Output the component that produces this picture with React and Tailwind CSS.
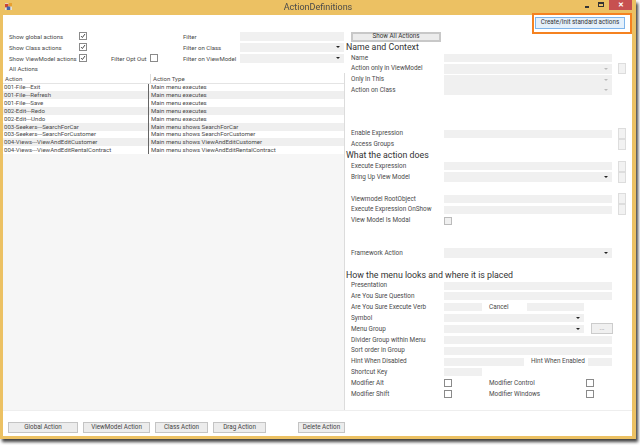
const font = { fontFamily: 'Roboto, "Liberation Sans", sans-serif' };

function Check({ checked, muted }) {
  return (
    <span className={"flex h-[8px] w-[8px] shrink-0 items-center justify-center border " + (muted ? "border-[#bbbbbb] bg-[#f0f0f0]" : "border-[#8a8a8a] bg-white")}>
      {checked && (
        <svg viewBox="0 0 8 8" className="h-[8px] w-[8px]" fill="none" stroke="#333" strokeWidth="1.2">
          <path d="M1.5 4.2 L3.2 6 L6.6 1.4" />
        </svg>
      )}
    </span>
  );
}

function Arrow({ light }) {
  return <span className={"mr-[4px] h-0 w-0 border-x-[2px] border-t-[2.5px] border-x-transparent " + (light ? "border-t-[#bbbbbb]" : "border-t-[#222222]")} />;
}

function Field({ w, combo, light, h = "h-[8px]" }) {
  return (
    <span className={"flex shrink-0 items-center justify-end bg-[#f0f0f0] " + h + " " + w}>
      {combo && <Arrow light={light} />}
    </span>
  );
}

function Side() {
  return <span className="ml-[6px] h-[11px] w-[8px] shrink-0 border border-[#dddddd] bg-[#f2f2f2]" />;
}

function Row({ label, children, side }) {
  return (
    <div className="flex h-[10.85px] items-center">
      <span className="w-[93px] shrink-0 whitespace-nowrap pt-[1px]">{label}</span>
      {children}
      {side && <Side />}
    </div>
  );
}

function Heading({ children }) {
  return <div className="-ml-[5px] flex h-[10.85px] items-center whitespace-nowrap pt-[1px] text-[8.8px] text-[#333333]">{children}</div>;
}

const Gap = ({ n = 1 }) => <div style={{ height: n * 10.85 }} />;

const actions = [
  ["001-File---Exit", "Main menu executes"],
  ["001-File---Refresh", "Main menu executes"],
  ["001-File---Save", "Main menu executes"],
  ["002-Edit---Redo", "Main menu executes"],
  ["002-Edit---Undo", "Main menu executes"],
  ["003-Seekers---SearchForCar", "Main menu shows SearchForCar"],
  ["003-Seekers---SearchForCustomer", "Main menu shows SearchForCustomer"],
  ["004-Views---ViewAndEditCustomer", "Main menu shows ViewAndEditCustomer"],
  ["004-Views---ViewAndEditRentalContract", "Main menu shows ViewAndEditRentalContract"],
];

function BottomButton({ w, ml, children }) {
  return (
    <button className={"flex h-[11px] items-center justify-center border border-[#c4c4c4] bg-[#ececec] text-[6.3px] text-[#444444] " + w + " " + ml}>
      {children}
    </button>
  );
}

function FilterRow({ label, mid, checked, filter, combo }) {
  return (
    <div className="flex h-[11px] items-center">
      <span className="w-[70px] shrink-0 whitespace-nowrap pt-[1px]">{label}</span>
      <Check checked={checked} />
      <span className="ml-[24px] w-[39px] shrink-0 whitespace-nowrap pt-[1px]">{mid}</span>
      <span className="w-[8px] shrink-0">{mid && <Check />}</span>
      <span className="ml-[25px] w-[57px] shrink-0 whitespace-nowrap pt-[1px]">{filter}</span>
      <Field w="w-[104px]" combo={combo} h="h-[9px]" />
    </div>
  );
}

export default function App() {
  return (
    <div className="relative h-[445px] w-[640px] overflow-hidden bg-white text-[6.4px] text-[#4a4a4a]" style={font}>
      <div className="h-[439px] w-[636px] bg-[#ecc163] shadow-[2px_3px_3px_rgba(0,0,0,0.75)] blur-[0.4px]">
        <div className="relative flex h-[15px] items-center justify-center text-[9px] text-[#4a4a4a]">
          <svg viewBox="0 0 8 8" className="absolute left-[5px] top-[3px] h-[7px] w-[7px]">
            <rect width="8" height="8" fill="#e8e0d0" />
            <rect x="0" y="1" width="4" height="4" fill="#cc4433" />
            <rect x="4" y="0" width="4" height="4" fill="#e8a030" />
            <rect x="2" y="4" width="4" height="4" fill="#4466aa" />
          </svg>
          <span>ActionDefinitions</span>
          <span className="absolute left-[585px] top-[6px] h-[1.5px] w-[4px] bg-[#333333]" />
          <span className="absolute left-[598px] top-[2px] h-[5px] w-[6px] border border-t-2 border-[#333333]" />
          <span className="absolute left-[609px] top-0 flex h-[10px] w-[23px] items-center justify-center bg-[#c75050] text-[7px] font-bold text-white">✕</span>
        </div>

        <div className="ml-[3px] flex h-[421px] w-[629px] flex-col bg-white">
          <div className="flex h-[395px]">
            <div className="flex w-[342px] shrink-0 flex-col text-[6.05px]">
              <div className="flex flex-col pl-[6px] pt-[15.5px]">
                <FilterRow label="Show global actions" checked filter="Filter" />
                <FilterRow label="Show Class actions" checked filter="Filter on Class" combo />
                <FilterRow label="Show ViewModel actions" checked mid="Filter Opt Out" filter="Filter on ViewModel" combo />
                <div className="flex h-[9.5px] items-center pt-[1px]">All Actions</div>
              </div>
              <div className="flex flex-1 flex-col border-r border-[#dcdcdc] bg-[#f6f6f6]">
                <div className="flex h-[10.5px] shrink-0 items-center border-b border-[#e4e4e4] bg-white pl-[2px] pt-[1px]">
                  <span className="w-[146px] shrink-0 border-r border-[#dddddd]">Action</span>
                  <span className="pl-[2px]">Action Type</span>
                </div>
                <div className="flex flex-col">
                  {actions.map(([a, t], i) => (
                    <div key={a} className={"flex h-[7.85px] items-center leading-none " + (i % 2 ? "bg-[#efefef]" : "bg-white")}>
                      <span className="w-[145px] shrink-0 whitespace-nowrap pl-[1px]">{a}</span>
                      <span className="flex h-full items-center whitespace-nowrap border-l border-[#666666] pl-[2px]">{t}</span>
                    </div>
                  ))}
                </div>
              </div>
            </div>

            <div className="flex flex-1 flex-col pl-[6px]">
              <div className="flex h-[17px] shrink-0 justify-end pr-[7px] pt-[2px]">
                <button className="flex h-[12px] w-[90px] items-center justify-center border border-[#7eb4ea] bg-[#e4f0fb] text-[6.3px] text-[#333333]">
                  Create/Init standard actions
                </button>
              </div>
              <div className="h-[9.6px] shrink-0">
                <button className="flex h-[10px] w-[90px] items-center justify-center border-2 border-[#c8c8c8] bg-[#ececec] text-[6.3px] text-[#333333]">
                  Show All Actions
                </button>
              </div>
              <Heading>Name and Context</Heading>
              <Row label="Name"><Field w="w-[168px]" /></Row>
              <Row label="Action only in ViewModel" side><Field w="w-[168px]" h="h-[10px]" combo light /></Row>
              <Row label="Only In This"><Field w="w-[168px]" h="h-[10px]" combo light /></Row>
              <Row label="Action on Class"><Field w="w-[168px]" h="h-[10px]" combo light /></Row>
              <Gap n={3} />
              <Row label="Enable Expression" side><Field w="w-[168px]" /></Row>
              <div className="flex h-[10.85px] items-center">
                <span className="w-[261px] shrink-0 pt-[1px]">Access Groups</span>
                <Side />
              </div>
              <Heading>What the action does</Heading>
              <Row label="Execute Expression" side><Field w="w-[168px]" /></Row>
              <Row label="Bring Up View Model" side><Field w="w-[168px]" h="h-[10px]" combo /></Row>
              <Gap />
              <Row label="Viewmodel RootObject" side><Field w="w-[168px]" /></Row>
              <Row label="Execute Expression OnShow" side><Field w="w-[168px]" /></Row>
              <Row label="View Model Is Modal"><Check muted /></Row>
              <Gap n={2} />
              <Row label="Framework Action"><Field w="w-[168px]" h="h-[10px]" combo /></Row>
              <Gap />
              <Heading>How the menu looks and where it is placed</Heading>
              <Row label="Presentation"><Field w="w-[168px]" /></Row>
              <Row label="Are You Sure Question"><Field w="w-[168px]" /></Row>
              <Row label="Are You Sure Execute Verb">
                <Field w="w-[38px]" />
                <span className="ml-[7px] w-[38px] shrink-0 pt-[1px]">Cancel</span>
                <Field w="w-[57px]" />
              </Row>
              <Row label="Symbol"><Field w="w-[140px]" combo /></Row>
              <Row label="Menu Group">
                <Field w="w-[140px]" combo />
                <span className="ml-[7px] flex h-[11px] w-[22px] items-center justify-center border border-[#cccccc] bg-[#f0f0f0] text-[#999999]">...</span>
              </Row>
              <Row label="Divider Group within Menu"><Field w="w-[168px]" /></Row>
              <Row label="Sort order in Group"><Field w="w-[168px]" /></Row>
              <Row label="Hint When Disabled">
                <Field w="w-[80px]" />
                <span className="ml-[7px] w-[57px] shrink-0 whitespace-nowrap pt-[1px]">Hint When Enabled</span>
                <Field w="w-[24px]" />
              </Row>
              <Row label="Shortcut Key"><Field w="w-[38px]" /></Row>
              <Row label="Modifier Alt">
                <Check />
                <span className="ml-[37px] w-[97px] shrink-0 pt-[1px]">Modifier Control</span>
                <Check />
              </Row>
              <Row label="Modifier Shift">
                <Check />
                <span className="ml-[37px] w-[97px] shrink-0 pt-[1px]">Modifier Windows</span>
                <Check />
              </Row>
            </div>
          </div>

          <div className="flex flex-1 items-start border-t border-[#eeeeee] pl-[5px] pt-[11px]">
            <BottomButton w="w-[70px]" ml="">Global Action</BottomButton>
            <BottomButton w="w-[67px]" ml="ml-[5px]">ViewModel Action</BottomButton>
            <BottomButton w="w-[53px]" ml="ml-[5px]">Class Action</BottomButton>
            <BottomButton w="w-[53px]" ml="ml-[5px]">Drag Action</BottomButton>
            <BottomButton w="w-[47px]" ml="ml-[32px]">Delete Action</BottomButton>
          </div>
        </div>
      </div>
      <div className="pointer-events-none absolute left-[532px] top-[13px] h-[21px] w-[100px] border-2 border-[#f58220]" />
    </div>
  );
}
